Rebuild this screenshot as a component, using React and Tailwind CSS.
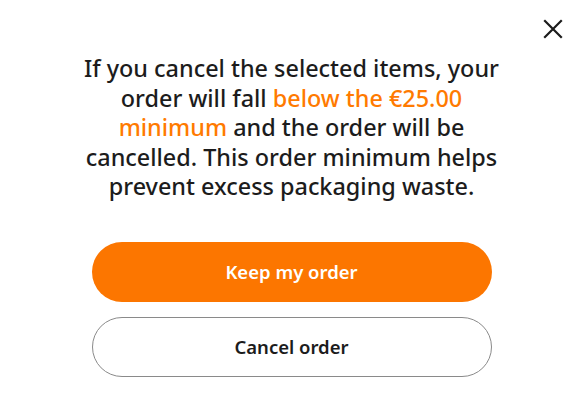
import React from "react";

const CloseIcon = () => (
  <svg
    xmlns="http://www.w3.org/2000/svg"
    viewBox="0 0 24 24"
    fill="none"
    stroke="currentColor"
    strokeWidth={2.2}
    strokeLinecap="square"
    className="w-[24px] h-[24px]"
  >
    <path d="M4 4L20 20M20 4L4 20" />
  </svg>
);

const App = () => {
  return (
    <div
      className="w-[578px] h-[420px] bg-white flex flex-col items-center relative pl-[5px]"
      style={{ fontFamily: '"Noto Sans", "Open Sans", sans-serif' }}
    >
      <button className="absolute top-[17px] right-[13px] text-[#1c1c1c]" aria-label="Close">
        <CloseIcon />
      </button>

      <p className="mt-[54px] w-[460px] text-center text-[23.4px] leading-[29.5px] font-medium text-[#1c1c1c]">
        If you cancel the selected items, your
        <br />
        order will fall <span className="text-[#ff7a00]">below the €25.00</span>
        <br />
        <span className="text-[#ff7a00]">minimum</span> and the order will be
        <br />
        cancelled. This order minimum helps
        <br />
        prevent excess packaging waste.
      </p>

      <div className="mt-[40px] flex flex-col gap-[15px] w-[400px]">
        <button className="h-[60px] rounded-full bg-[#fc7600] text-white text-[18.5px] font-semibold">
          Keep my order
        </button>
        <button className="h-[60px] rounded-full border border-[#8a8a8a] bg-white text-[#1c1c1c] text-[18.5px] font-semibold">
          Cancel order
        </button>
      </div>
    </div>
  );
};

export default App;
